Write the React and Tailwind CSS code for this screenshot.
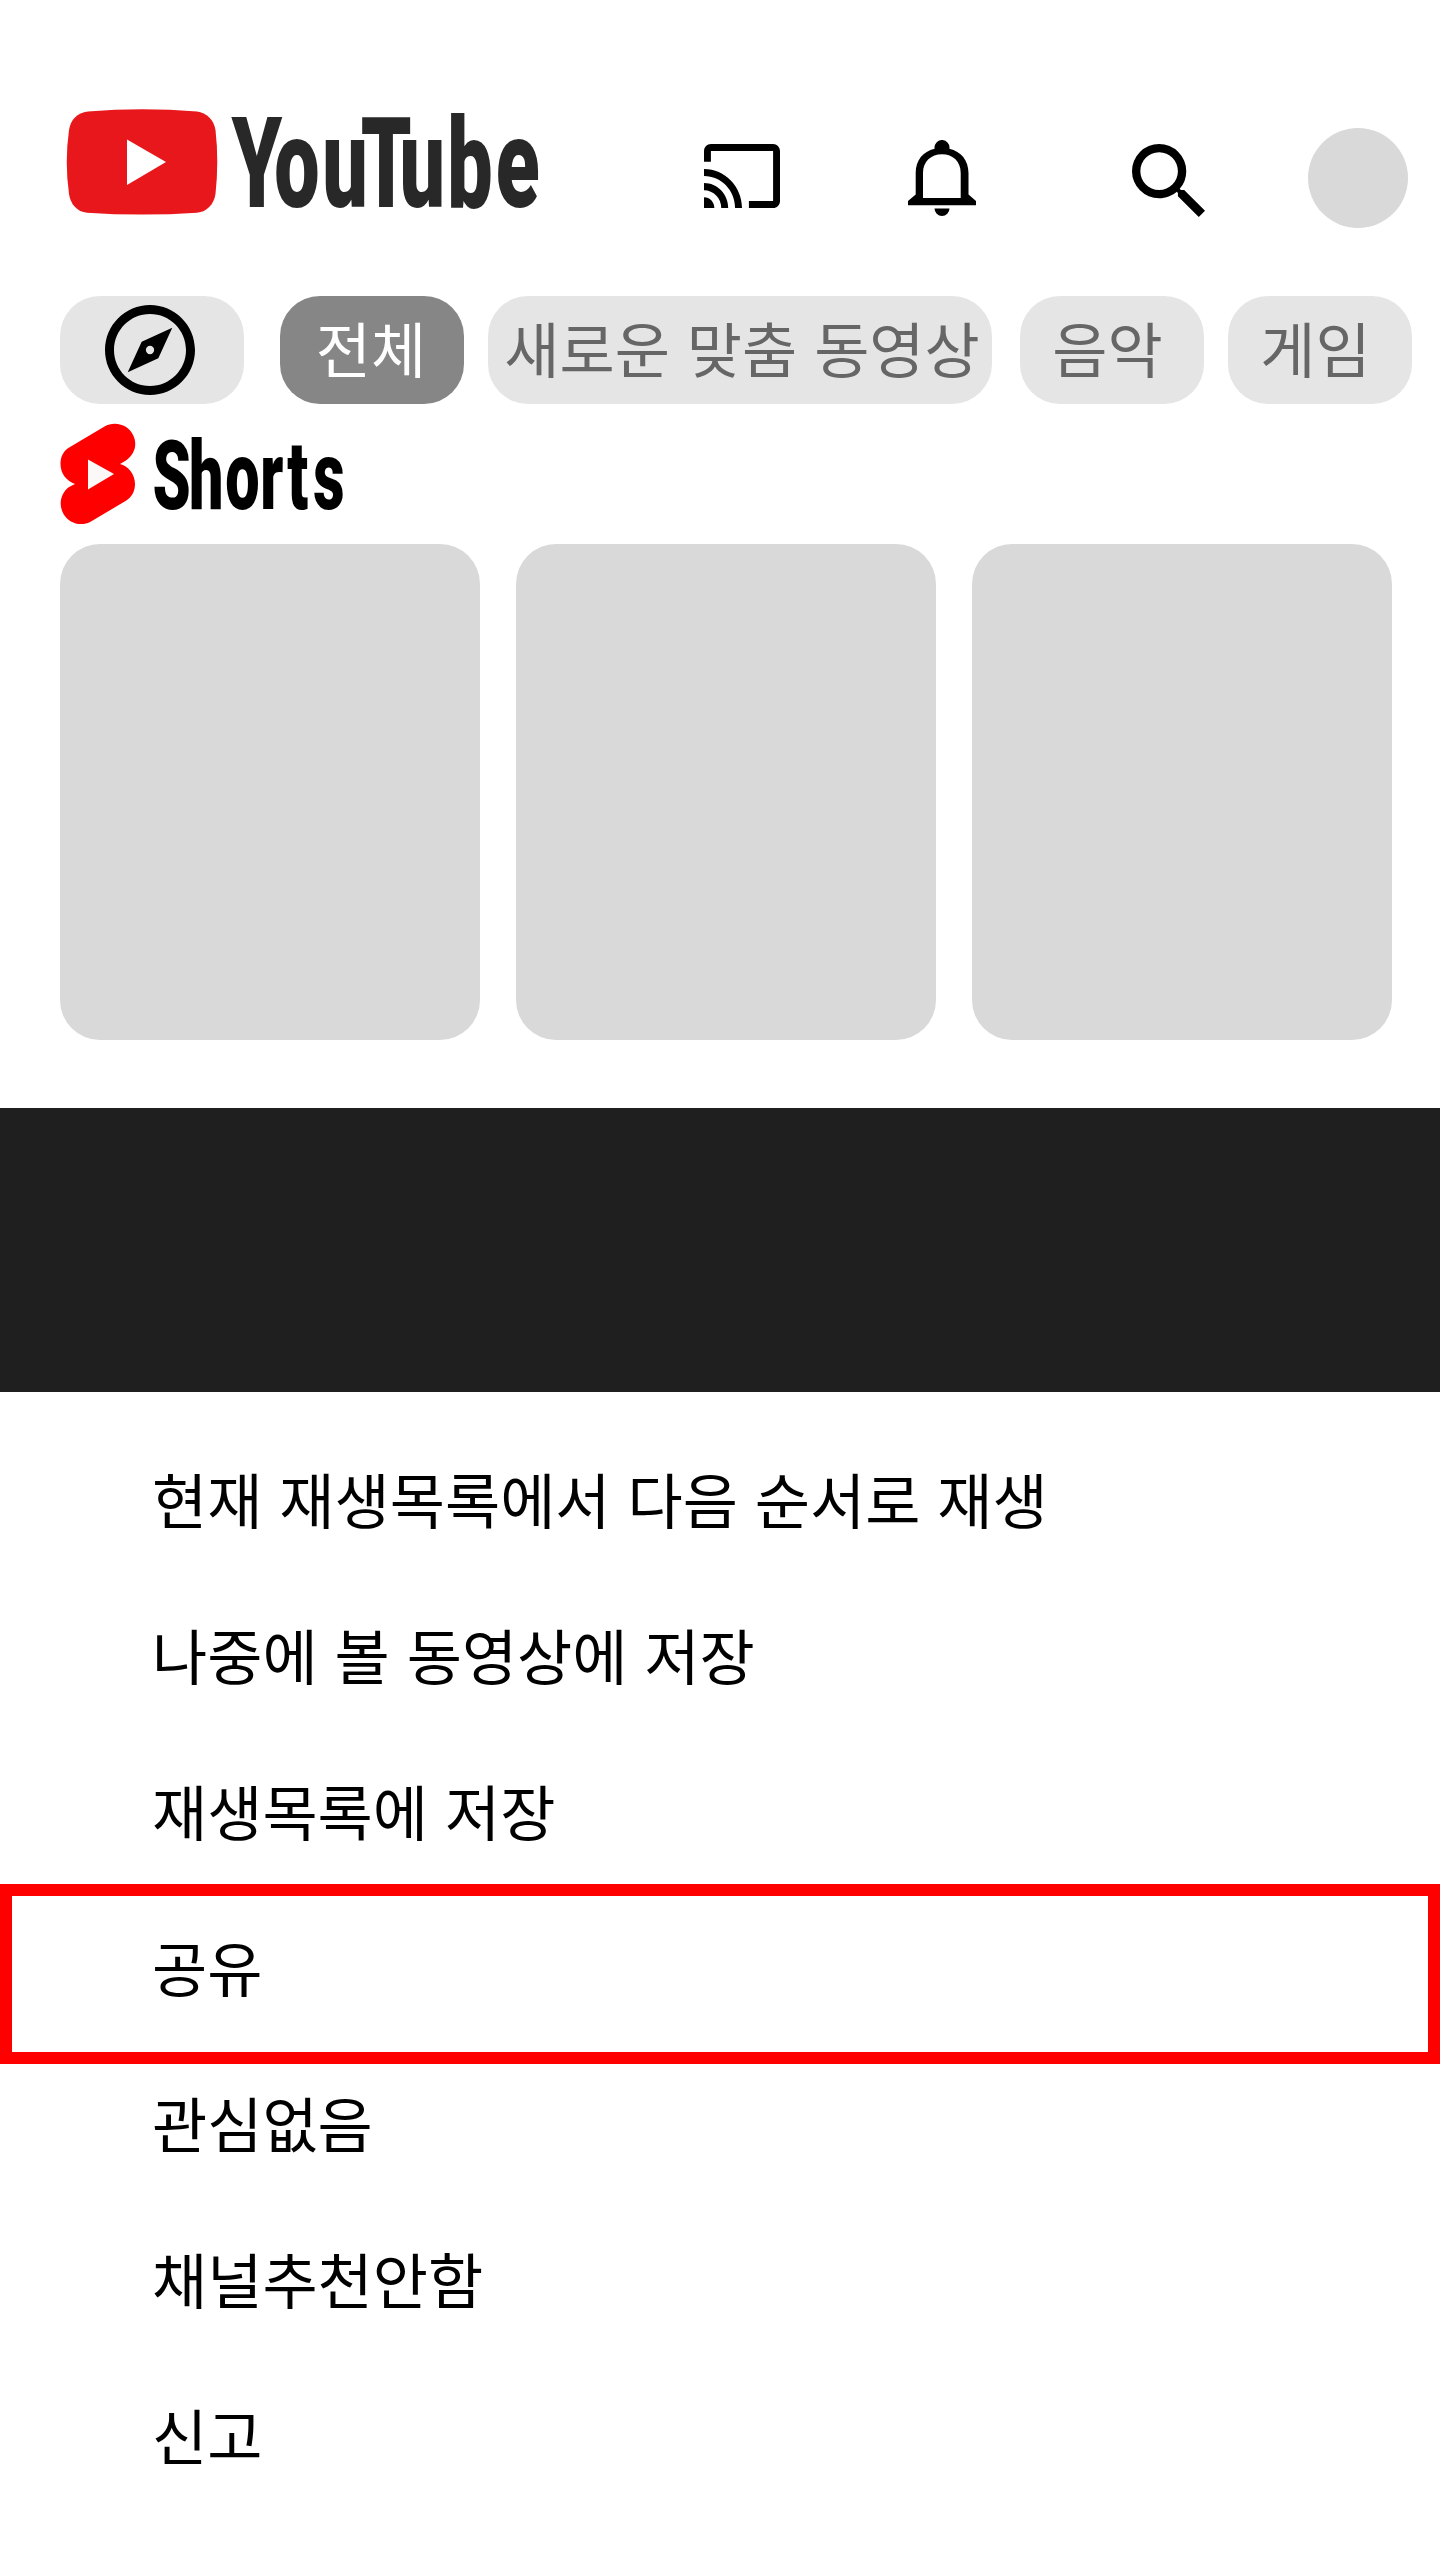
const font = "font-['Noto_Sans_CJK_KR','Noto_Sans_CJK_SC',sans-serif]";

const chips = [
  { label: '전체', cls: 'w-[184px] ml-9 pr-[2px] bg-[#868686] text-white' },
  { label: '새로운 맞춤 동영상', cls: 'w-[504px] ml-6 pl-[4px] bg-[#e5e5e5] text-[#666666]' },
  { label: '음악', cls: 'w-[184px] ml-7 pr-[9px] bg-[#e5e5e5] text-[#666666]' },
  { label: '게임', cls: 'w-[184px] ml-6 pr-[9px] bg-[#e5e5e5] text-[#666666]' },
];

const menu = [
  '현재 재생목록에서 다음 순서로 재생',
  '나중에 볼 동영상에 저장',
  '재생목록에 저장',
  '공유',
  '관심없음',
  '채널추천안함',
  '신고',
];

function YouTubeLogo() {
  return (
    <svg className="ml-[66px] mt-[109px] h-[107px] w-[476px] shrink-0 overflow-visible" viewBox="66 109 476 107" role="img" aria-label="YouTube">
      <path fill="#e8171b" d="M88 111.500Q142 107 197 111.500C206.500 112.500 214 120 215.500 130Q219 161 215.500 194C214 204 207 212 197 212.700Q142 216.500 87 212.700C77 212 70.500 204 69 194Q64.500 162 69 130C70.500 120 77 112.500 88 111.500Z" />
      <path fill="#fff" d="M127 139.500 166 162 127 185Z" />
      <g transform="translate(231.500 207.300) scale(0.64 1)">
        <text x="0 67 142 202 262.500 337 413" y="0" fill="#282828" fontFamily="Roboto, sans-serif" fontWeight="900" fontSize="126">YouTube</text>
      </g>
    </svg>
  );
}

function ShortsLogo() {
  return (
    <svg className="ml-[60px] mt-5 h-[101px] w-[290px] overflow-visible" viewBox="60 424 290 101" role="img" aria-label="Shorts">
      <path fill="#f00" d="M104.500 426.500C114 421 127 424 132.500 434C138 444 135 454 126 460.500L120 464C128 466 135 474 135 484C135 491 132 497 125.500 501L91 521.500C81 527 69 523.500 63.500 514C58 504 61 493 69 487L75 484C67 481 60.500 474 60.500 464C60.500 457 63 451 70 447Z" />
      <path fill="#fdf8f8" d="M88 459.500 114 474 88 489.500Z" />
      <g transform="translate(152.500 508.500) scale(0.63 1)">
        <text x="0 58 115.500 171 214 255" y="0" fill="#000" fontFamily="Roboto, sans-serif" fontWeight="900" fontSize="97">Shorts</text>
      </g>
    </svg>
  );
}

export default function App() {
  return (
    <main className={`flex h-[2560px] w-[1440px] flex-col overflow-hidden bg-white text-[60px] [word-spacing:3.5px] ${font}`}>
      <header className="flex h-[296px] items-start">
        <YouTubeLogo />
        <svg className="ml-[162px] mt-[144px] h-16 w-[76px] shrink-0" viewBox="1 3 22 18" preserveAspectRatio="none">
          <path d="M21 3H3c-1.100 0-2 .9-2 2v3h2V5h18v14h-7v2h7c1.100 0 2-.9 2-2V5c0-1.100-.9-2-2-2zM1 18v3h3c0-1.660-1.340-3-3-3zm0-4v2c2.760 0 5 2.240 5 5h2c0-3.870-3.130-7-7-7zm0-4v2c4.970 0 9 4.030 9 9h2c0-6.080-4.930-11-11-11z" />
        </svg>
        <svg className="ml-32 mt-[140px] h-[76px] w-[68px] shrink-0" viewBox="0 0 68 76">
          <path fillRule="evenodd" d="M0 65.300V61L7.700 54.500V33C7.700 20 15 11.500 26.600 8.700A7.500 7.500 0 1 1 41.400 8.700C53 11.500 60.500 20 60.500 33V54.500L68 61V65.300ZM15 58H52.700V33C52.700 21.500 45 14.300 34 14.300S15 21.500 15 33Z" />
          <path d="M26.500 68.500H41.500A7.500 7.500 0 0 1 26.500 68.500Z" />
        </svg>
        <svg className="ml-[156px] mt-[144px] h-[73px] w-[73px] shrink-0" viewBox="3 3 17.490 17.490">
          <path d="M15.500 14h-.79l-.28-.27A6.471 6.471 0 0 0 16 9.500 6.500 6.500 0 1 0 9.500 16c1.610 0 3.090-.59 4.230-1.570l.27.28v.79l5 4.990L20.490 19l-4.990-5zm-6 0C7.010 14 5 11.990 5 9.500S7.010 5 9.500 5 14 7.010 14 9.500 11.990 14 9.500 14z" />
        </svg>
        <div className="ml-[103px] mt-32 size-[100px] shrink-0 rounded-full bg-[#d9d9d9]" />
      </header>

      <nav className="flex h-[108px] shrink-0 pl-[60px]">
        <div className="flex w-[184px] items-center justify-center rounded-[40px] bg-[#e5e5e5] pr-1">
          <svg className="size-[90px]" viewBox="2 2 20 20">
            <path d="M12 2C6.480 2 2 6.480 2 12s4.480 10 10 10 10-4.480 10-10S17.520 2 12 2zm0 18c-4.410 0-8-3.590-8-8s3.590-8 8-8 8 3.590 8 8-3.590 8-8 8z" />
            <path fillRule="evenodd" d="M7.050 16.950 10.150 10.150 16.950 7.050 13.850 13.850ZM12 11.080a.92.92 0 1 0 0 1.840.92.92 0 0 0 0-1.840z" />
          </svg>
        </div>
        {chips.map((c) => (
          <div key={c.label} className={`flex shrink-0 items-start justify-center whitespace-nowrap rounded-[40px] leading-[102px] ${c.cls}`}>
            {c.label}
          </div>
        ))}
      </nav>

      <section className="h-[704px] shrink-0">
        <ShortsLogo />
        <div className="mt-[19px] flex gap-9 pl-[60px]">
          <div className="h-[496px] w-[420px] rounded-[40px] bg-[#d9d9d9]" />
          <div className="h-[496px] w-[420px] rounded-[40px] bg-[#d9d9d9]" />
          <div className="h-[496px] w-[420px] rounded-[40px] bg-[#d9d9d9]" />
        </div>
      </section>

      <div className="h-[284px] shrink-0 bg-[#1f1f1f]" />

      <ul className="relative pt-[28px]">
        {menu.map((label) => (
          <li key={label} className="flex h-[156px] items-center whitespace-nowrap pl-[152px] text-black">
            {label}
          </li>
        ))}
        <li aria-hidden="true" className="pointer-events-none absolute left-0 top-[492px] h-[180px] w-full border-[12px] border-[#ff0000]" />
      </ul>
    </main>
  );
}
